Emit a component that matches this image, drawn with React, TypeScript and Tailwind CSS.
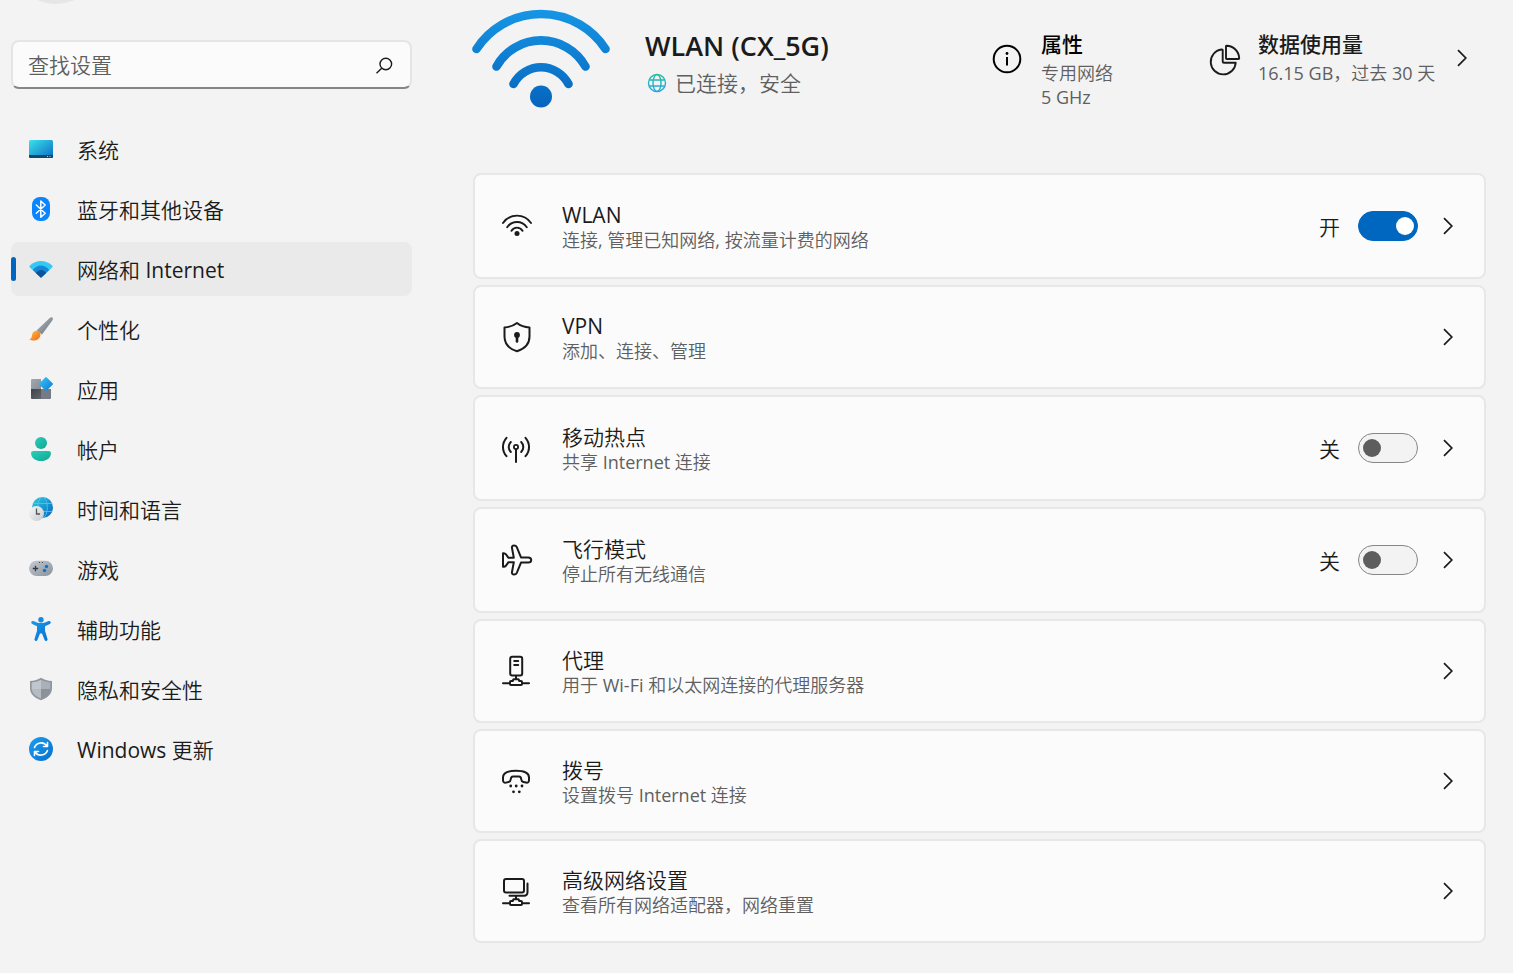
import { useState, type ReactNode } from "react";

const NavSvg = ({ children }: { children: ReactNode }) => (
  <svg viewBox="0 0 24 24" className="size-6 shrink-0" aria-hidden="true">
    {children}
  </svg>
);

type GradientProps = { id: string; from: string; to: string };

const Gradient = ({ id, from, to }: GradientProps) => (
  <linearGradient id={id} x1="0" y1="0" x2="1" y2="1">
    <stop offset="0" stopColor={from} />
    <stop offset="1" stopColor={to} />
  </linearGradient>
);

const SystemIcon = () => (
  <NavSvg>
    <defs>
      <Gradient id="sys" from="#3be2ea" to="#0a6cc4" />
      <clipPath id="sysClip">
        <rect y="3" width="24" height="18" rx="1.5" />
      </clipPath>
    </defs>
    <g clipPath="url(#sysClip)">
      <rect y="3" width="24" height="18" fill="url(#sys)" />
      <rect y="18" width="24" height="3" fill="#0a4a70" />
      <path d="M18 19.5h1M20.5 19.5h1" stroke="#9fd0ea" strokeWidth="1" />
    </g>
  </NavSvg>
);

const BluetoothIcon = () => (
  <NavSvg>
    <rect x="3" width="18" height="24" rx="8" fill="#0a84ff" />
    <path d="M7.3 8l8.9 8.2-4.4 4V4l4.4 4-8.9 8.2" fill="none" stroke="#fff" strokeWidth="1.5" strokeLinejoin="round" strokeLinecap="round" />
  </NavSvg>
);

const NetworkIcon = () => (
  <NavSvg>
    <path d="M12 20.8.9 10.4c-.6-.6-.6-1.3 0-1.9C7 2.500 17 2.500 23.100 8.500c.6.6.6 1.300 0 1.900z" fill="#35c8f4" />
    <path d="M12 20.800 3.800 13c4.500-6 11.900-6 16.400 0z" fill="#1488d8" />
    <path d="M12 20.800 6.800 15.900c2.800-3.900 7.600-3.900 10.400 0z" fill="#0c5399" />
  </NavSvg>
);

const BrushIcon = () => (
  <NavSvg>
    <defs>
      <Gradient id="handle" from="#b4bac2" to="#687079" />
      <Gradient id="tip" from="#ffc23a" to="#f0641c" />
    </defs>
    <path d="M23.400.6c.8.8.600 2-.1 3L13 17.500 7.500 13.600 20.700 1c.9-.8 2-1.100 2.700-.4z" fill="url(#handle)" />
    <path d="M7.200 13.700c2.600.2 4.200 1.700 4.300 4.300-.3 3.500-3.500 5.600-7 5.600-1.700 0-3.300-.5-4.200-1.400 1.900-.4 2.300-1.700 2.700-4 .4-2.600 1.800-4.300 4.200-4.500z" fill="url(#tip)" />
  </NavSvg>
);

const AppsIcon = () => (
  <NavSvg>
    <defs>
      <Gradient id="diamond" from="#3ac8f5" to="#0a78d6" />
      <Gradient id="appDark" from="#3d4248" to="#60666c" />
      <Gradient id="appLight" from="#a2a9b1" to="#868d95" />
    </defs>
    <path d="M3 2h9v10H2V3a1 1 0 0 1 1-1z" fill="url(#appLight)" />
    <path d="M2 12h10v10H3a1 1 0 0 1-1-1z" fill="url(#appDark)" />
    <path d="M12 12h10v9a1 1 0 0 1-1 1h-9z" fill="#747b84" />
    <path d="M16.300.4a1 1 0 0 1 1.400 0l5.900 5.900a1 1 0 0 1 0 1.400l-5.900 5.900a1 1 0 0 1-1.400 0l-5.900-5.900a1 1 0 0 1 0-1.400z" fill="url(#diamond)" />
  </NavSvg>
);

const AccountIcon = () => (
  <NavSvg>
    <defs>
      <Gradient id="acct" from="#2bd0b8" to="#0fa596" />
    </defs>
    <circle cx="12" cy="6" r="6" fill="url(#acct)" />
    <path d="M4.300 14h15.400c1.300 0 2.200.9 2.200 2.200C21.900 21 17.500 24 12 24S2.100 21 2.100 16.200C2.100 14.900 3 14 4.300 14z" fill="url(#acct)" />
  </NavSvg>
);

const TimeIcon = () => (
  <NavSvg>
    <defs>
      <Gradient id="globe" from="#2fd0de" to="#0862c0" />
      <Gradient id="clock" from="#f8f8f8" to="#c6c9cc" />
    </defs>
    <circle cx="13.500" cy="10.500" r="10.500" fill="url(#globe)" />
    <g fill="none" stroke="#50c2ee" strokeWidth=".9">
      <ellipse cx="13.500" cy="10.500" rx="4.800" ry="10.300" />
      <path d="M3.800 6.500h19.400M3.800 14.500h19.400" />
    </g>
    <circle cx="7.500" cy="16.500" r="7.500" fill="url(#clock)" />
    <path d="M7.500 11.500v5.500h3.500" fill="none" stroke="#50565c" strokeWidth="1.300" />
  </NavSvg>
);

const GameIcon = () => (
  <NavSvg>
    <defs>
      <Gradient id="pad" from="#c5cbd2" to="#89919a" />
    </defs>
    <rect y="3.700" width="24" height="15.300" rx="7.600" fill="url(#pad)" />
    <path d="M6.500 8.800v5.400M3.800 11.500h5.400" stroke="#343a40" strokeWidth="1.300" />
    <circle cx="17.500" cy="9.500" r="1.700" fill="#0a74d4" />
    <circle cx="15.500" cy="13.500" r="1.700" fill="#0a74d4" />
    <circle cx="10.500" cy="5.500" r=".6" fill="#343a40" />
    <circle cx="13.500" cy="5.500" r=".6" fill="#343a40" />
  </NavSvg>
);

const AccessIcon = () => (
  <NavSvg>
    <defs>
      <Gradient id="access" from="#1c9aea" to="#0670d0" />
    </defs>
    <circle cx="12" cy="2.700" r="2.700" fill="#148be0" />
    <path d="M2.300 4.900c.3-.9 1.200-1.200 2.100-.9C6.800 5 9 6.100 12 6.100S17.200 5 19.600 4c.9-.3 1.800 0 2.100.9.300.9-.1 1.600-.9 2L16 9.200v4.500l2.500 8.200c.3.9-.1 1.700-1 2-.8.2-1.600-.1-1.900-1L13 16.500h-2l-2.600 6.400c-.3.9-1.100 1.200-1.900 1-.9-.3-1.300-1.100-1-2L8 13.700V9.200L3.200 6.900c-.8-.4-1.200-1.100-.9-2z" fill="url(#access)" />
  </NavSvg>
);

const PrivacyIcon = () => (
  <NavSvg>
    <path d="M12 .8c3 2 6.500 3 11 3.200V11c0 6-4.500 10-11 12.300C5.500 21 1 17 1 11V4C5.500 3.800 9 2.800 12 .8z" fill="#8e969e" />
    <path d="M12 2.800V12H2.700V5.500C6.500 5.200 9.300 4.300 12 2.800z" fill="#c0c6cd" />
    <path d="M12 2.800V12h9.300V5.500C17.500 5.200 14.700 4.300 12 2.800z" fill="#a9b0b8" />
    <path d="M2.700 12H12v9.500C6.800 19.500 3.200 16.500 2.700 12z" fill="#b4bbc2" />
    <path d="M21.300 12H12v9.500c5.200-2 8.800-5 9.300-9.500z" fill="#8b929a" />
  </NavSvg>
);

const UpdateIcon = () => (
  <NavSvg>
    <defs>
      <Gradient id="upd" from="#1c9df0" to="#0770cc" />
    </defs>
    <circle cx="12" cy="12" r="12" fill="url(#upd)" />
    <g fill="none" stroke="#fff" strokeWidth="1.600" strokeLinecap="round" strokeLinejoin="round">
      <path d="M5.500 10.500C7.500 5.300 14.500 4 18 9M18.500 5.500V9.500H14.500" />
      <path d="M18.500 13.500C16.500 18.700 9.500 20 6 15M5.500 18.500V14.500H9.500" />
    </g>
  </NavSvg>
);

const RowSvg = ({ children }: { children: ReactNode }) => (
  <svg
    viewBox="0 0 32 32"
    className="size-8 shrink-0"
    fill="none"
    stroke="#1b1b1b"
    strokeWidth="2"
    strokeLinecap="round"
    strokeLinejoin="round"
    aria-hidden="true"
  >
    {children}
  </svg>
);

const WlanIcon = () => (
  <RowSvg>
    <path d="M2 13A17 17 0 0 1 30 13M6.200 17.200A11.800 11.800 0 0 1 25.800 17.200M10.500 20.800A6.400 6.400 0 0 1 21.500 20.800" strokeWidth="1.900" />
    <circle cx="16" cy="23.500" r="2.500" fill="#1b1b1b" stroke="none" />
  </RowSvg>
);

const VpnIcon = () => (
  <RowSvg>
    <path d="M16 2C12.500 4.800 8.200 6.200 3.500 6.500V15.500C3.500 23 9 28 16 30.200 23 28 28.500 23 28.500 15.500V6.500C23.800 6.200 19.500 4.800 16 2Z" />
    <circle cx="16" cy="14" r="2.900" fill="#1b1b1b" stroke="none" />
    <path d="M16 15v5.500" strokeWidth="2.600" />
  </RowSvg>
);

const HotspotIcon = () => (
  <RowSvg>
    <circle cx="15" cy="15" r="2.100" strokeWidth="1.800" />
    <path d="M15 17.500V30M5.500 5.800C.8 11 .8 19 5.500 24.200M9.800 10C7 12.800 7 17.200 9.800 20M24.500 5.800C29.200 11 29.200 19 24.500 24.200M20.200 10C23 12.800 23 17.200 20.200 20" />
  </RowSvg>
);

const PlaneIcon = () => (
  <RowSvg>
    <path d="M2 9.200c1.500-.2 2.300.2 3 1.200l2.500 3.400h5.300L11 4c-.3-1.700.6-2.500 2-2.500 1.300 0 2.200.4 2.800 1.700L20 13.400h7.200c1.900 0 3 1.100 3 2.600s-1.100 2.600-3 2.600H20l-4.200 10.200c-.6 1.300-1.500 1.700-2.800 1.700-1.400 0-2.300-.8-2-2.500l1.800-9.800H7.500L5 21.600c-.7 1-1.500 1.400-3 1.200z" />
  </RowSvg>
);

const networkBase = (
  <path d="M15 21v3M12.500 24.200h5l.8 1.800H20c.7 0 1 .3 1 1v2c0 .7-.3 1-1 1H10c-.7 0-1-.3-1-1v-2c0-.7.3-1 1-1h1.700zM2 28.200h6.500M21.500 28.200H28" />
);

const ProxyIcon = () => (
  <RowSvg>
    <rect x="9.200" y="1.800" width="12" height="18.700" rx="2" />
    <path d="M13.200 6h4M13.200 10h4" />
    {networkBase}
  </RowSvg>
);

const DialIcon = () => (
  <RowSvg>
    <path d="M2 12.500C2 7.800 8 5.800 15 5.800s13 2 13 6.700v2.800c0 1.800-1.200 2.700-3 2.300l-2.600-.6c-1.400-.3-2-1.200-2.100-2.500-.2-2-.8-2.900-2.300-2.900h-6c-1.500 0-2.100.9-2.300 2.900-.1 1.300-.7 2.200-2.100 2.500l-2.600.6c-1.800.4-3-.5-3-2.300z" />
    <g fill="#1b1b1b" stroke="none">
      <circle cx="9.700" cy="21" r="1.400" />
      <circle cx="15.200" cy="21" r="1.400" />
      <circle cx="21" cy="21" r="1.400" />
      <circle cx="12.500" cy="26.800" r="1.400" />
      <circle cx="18.300" cy="26.800" r="1.400" />
    </g>
  </RowSvg>
);

const AdvancedIcon = () => (
  <RowSvg>
    <rect x="3" y="4" width="20" height="13.500" rx="2" />
    <path d="M26.500 8.500v8.500c0 2.300-1.200 3.700-3.500 3.700H8.500" />
    {networkBase}
  </RowSvg>
);

const Chevron = () => (
  <svg viewBox="0 0 10 18" className="h-[18px] w-[10px] shrink-0" fill="none" stroke="#1b1b1b" strokeWidth="1.700" aria-hidden="true">
    <path d="M1 1.200 8.800 9 1 16.800" />
  </svg>
);

const navItems: { label: string; icon: ReactNode }[] = [
  { label: "系统", icon: <SystemIcon /> },
  { label: "蓝牙和其他设备", icon: <BluetoothIcon /> },
  { label: "网络和 Internet", icon: <NetworkIcon /> },
  { label: "个性化", icon: <BrushIcon /> },
  { label: "应用", icon: <AppsIcon /> },
  { label: "帐户", icon: <AccountIcon /> },
  { label: "时间和语言", icon: <TimeIcon /> },
  { label: "游戏", icon: <GameIcon /> },
  { label: "辅助功能", icon: <AccessIcon /> },
  { label: "隐私和安全性", icon: <PrivacyIcon /> },
  { label: "Windows 更新", icon: <UpdateIcon /> },
];

type Row = { id: string; title: string; note: string; icon: ReactNode; on?: boolean };

const rows: Row[] = [
  { id: "wlan", title: "WLAN", note: "连接, 管理已知网络, 按流量计费的网络", icon: <WlanIcon />, on: true },
  { id: "vpn", title: "VPN", note: "添加、连接、管理", icon: <VpnIcon /> },
  { id: "hotspot", title: "移动热点", note: "共享 Internet 连接", icon: <HotspotIcon />, on: false },
  { id: "airplane", title: "飞行模式", note: "停止所有无线通信", icon: <PlaneIcon />, on: false },
  { id: "proxy", title: "代理", note: "用于 Wi-Fi 和以太网连接的代理服务器", icon: <ProxyIcon /> },
  { id: "dial", title: "拨号", note: "设置拨号 Internet 连接", icon: <DialIcon /> },
  { id: "advanced", title: "高级网络设置", note: "查看所有网络适配器，网络重置", icon: <AdvancedIcon /> },
];

function Toggle({ id, title, initial }: { id: string; title: string; initial: boolean }) {
  const [on, setOn] = useState(initial);
  return (
    <div className="flex items-center gap-[18px]">
      <label htmlFor={id} className="pt-[2px] text-[21px] leading-[30px]">
        {on ? "开" : "关"}
      </label>
      <input
        id={id}
        type="checkbox"
        role="switch"
        aria-label={title}
        checked={on}
        onChange={(e) => setOn(e.target.checked)}
        className="flex h-[30px] w-[60px] appearance-none items-center rounded-full border border-[#868686] bg-[#f3f3f3] px-1 before:size-[18px] before:rounded-full before:bg-[#5d5d5d] checked:justify-end checked:border-[#0067c0] checked:bg-[#0067c0] checked:px-[3px] checked:before:bg-white"
      />
    </div>
  );
}

function SettingRow({ row }: { row: Row }) {
  const hasToggle = row.on !== undefined;
  return (
    <li
      className={`flex items-center rounded-lg border-2 border-[#e7e7e7] bg-[#fbfbfb] pr-[31px] pl-[26px] ${
        hasToggle ? "h-[106px]" : "h-[104px]"
      }`}
    >
      {row.icon}
      <a href={`#${row.id}`} className="ml-[29px] flex min-w-0 flex-1 flex-col pt-[2px]">
        <span className="text-[21px] leading-[26px]">{row.title}</span>
        <span className="text-[18px] leading-6 text-[#5f5f5f]">{row.note}</span>
      </a>
      {row.on !== undefined && <Toggle id={`${row.id}-switch`} title={row.title} initial={row.on} />}
      <button type="button" aria-label={row.title} className="ml-[25px]">
        <Chevron />
      </button>
    </li>
  );
}

function Sidebar() {
  return (
    <aside className="flex w-[401px] shrink-0 flex-col">
      <div className="-mt-[86px] size-[90px] rounded-full bg-[#e6e6e6]" />
      <div className="mt-9 flex h-[49px] items-center rounded-lg border-2 border-[#e5e5e5] border-b-[#868686] bg-[#fbfbfb] pr-[17px] pl-[15px]">
        <input
          type="search"
          aria-label="查找设置"
          placeholder="查找设置"
          className="min-w-0 flex-1 bg-transparent text-[21px] leading-[30px] outline-none placeholder:text-[#5f5f5f]"
        />
        <svg viewBox="0 0 18 18" className="size-[18px]" fill="none" stroke="#1b1b1b" strokeWidth="1.400" aria-hidden="true">
          <circle cx="10.800" cy="8" r="5.800" />
          <path d="M6.700 12.200 1.500 17.300" />
        </svg>
      </div>
      <nav className="mt-[33px]">
        <ul className="flex flex-col gap-[6px]">
          {navItems.map(({ label, icon }, index) => {
            const active = index === 2;
            return (
              <li key={label}>
                <a
                  href={`#${index}`}
                  aria-current={active ? "page" : undefined}
                  className={`relative flex h-[54px] items-center gap-6 rounded-lg pl-[18px] text-[21px] leading-[30px] ${
                    active ? "bg-[#eaeaea]" : ""
                  }`}
                >
                  {active && <span className="absolute left-0 h-6 w-[5px] rounded-full bg-[#0067c0]" />}
                  {icon}
                  <span className="pt-[2px]">{label}</span>
                </a>
              </li>
            );
          })}
        </ul>
      </nav>
    </aside>
  );
}

function Hero() {
  return (
    <header className="flex h-[173px] items-start pt-2">
      <svg viewBox="1 0 138 100" className="h-[100px] w-[138px] shrink-0 overflow-visible" aria-hidden="true">
        <defs>
          <linearGradient id="heroWifi" gradientUnits="userSpaceOnUse" x1="0" y1="0" x2="0" y2="100">
            <stop offset="0" stopColor="#1797e6" />
            <stop offset="1" stopColor="#0664bd" />
          </linearGradient>
        </defs>
        <g fill="none" stroke="url(#heroWifi)" strokeWidth="8.600" strokeLinecap="round">
          <path d="M4.500 41A77 77 0 0 1 133.500 41" />
          <path d="M24.500 58.500A51 51 0 0 1 113.500 58.500" />
          <path d="M41.500 76A31 31 0 0 1 96.500 76" />
        </g>
        <circle cx="69" cy="88.500" r="11" fill="url(#heroWifi)" />
      </svg>
      <div className="ml-[34px] pt-5">
        <h1 className="text-[27px] leading-9 font-semibold">WLAN (CX_5G)</h1>
        <p className="mt-1 flex items-center gap-2 pl-[2px] text-[21px] leading-[30px] text-[#5f5f5f]">
          <svg viewBox="0 0 20 20" className="size-5" fill="none" stroke="url(#statusGlobe)" strokeWidth="1.400" aria-hidden="true">
            <defs>
              <linearGradient id="statusGlobe" gradientUnits="userSpaceOnUse" x1="0" y1="0" x2="0" y2="20">
                <stop offset="0" stopColor="#1fc09c" />
                <stop offset="1" stopColor="#2aa5ea" />
              </linearGradient>
            </defs>
            <circle cx="10" cy="10" r="8.500" />
            <ellipse cx="10" cy="10" rx="4" ry="8.500" />
            <path d="M2.200 7h15.600M2.200 13h15.600" />
          </svg>
          已连接，安全
        </p>
      </div>
      <a href="#properties" className="ml-auto flex pt-5">
        <svg viewBox="0 0 30 30" className="mt-4 size-[30px] shrink-0" fill="none" stroke="#000" strokeWidth="2" aria-hidden="true">
          <circle cx="15" cy="15" r="13.300" />
          <path d="M15 13v8.500" />
          <circle cx="15" cy="9.500" r="1.400" fill="#000" stroke="none" />
        </svg>
        <span className="ml-[19px] flex w-[73px] flex-col gap-[3px]">
          <span className="font-['Noto_Sans_CJK_SC',sans-serif] text-[21px] leading-[30px] font-medium text-black">属性</span>
          <span className="text-[18px] leading-6 text-[#5f5f5f]">
            专用网络
            <br />5 GHz
          </span>
        </span>
      </a>
      <a href="#usage" className="ml-[95px] flex pt-5 pr-[19px]">
        <svg viewBox="0 0 32 32" className="mt-4 size-8 shrink-0" fill="none" stroke="#1b1b1b" strokeWidth="1.900" strokeLinejoin="round" aria-hidden="true">
          <path d="M12.500 5.500A12.500 12.500 0 1 0 26.700 18.700H15c-.9 0-1.300-.4-1.300-1.300V6c0-.4-.5-.6-1.200-.5z" />
          <path d="M17 2.300c0-.4.300-.6.700-.6A13 13 0 0 1 30.200 14.200c0 .5-.2.800-.7.800H17.700c-.5 0-.7-.2-.7-.7z" />
        </svg>
        <span className="ml-[17px] flex w-[168px] flex-col gap-[3px] whitespace-nowrap">
          <span className="font-['Noto_Sans_CJK_SC',sans-serif] text-[21px] leading-[30px] font-medium">数据使用量</span>
          <span className="text-[18px] leading-6 text-[#5f5f5f]">16.15 GB，过去 30 天</span>
        </span>
        <span className="mt-[21px] ml-[31px]">
          <Chevron />
        </span>
      </a>
    </header>
  );
}

export default function App() {
  return (
    <div className="flex min-h-screen gap-[61px] overflow-hidden bg-[#f3f3f3] pr-[27px] pl-[11px] font-['Open_Sans','Noto_Sans_CJK_SC_DemiLight','Noto_Sans_CJK_SC',sans-serif] text-[#1b1b1b]">
      <Sidebar />
      <main className="min-w-0 flex-1 pb-[31px]">
        <Hero />
        <ul className="flex flex-col gap-[6px]">
          {rows.map((row) => (
            <SettingRow key={row.id} row={row} />
          ))}
        </ul>
      </main>
    </div>
  );
}
